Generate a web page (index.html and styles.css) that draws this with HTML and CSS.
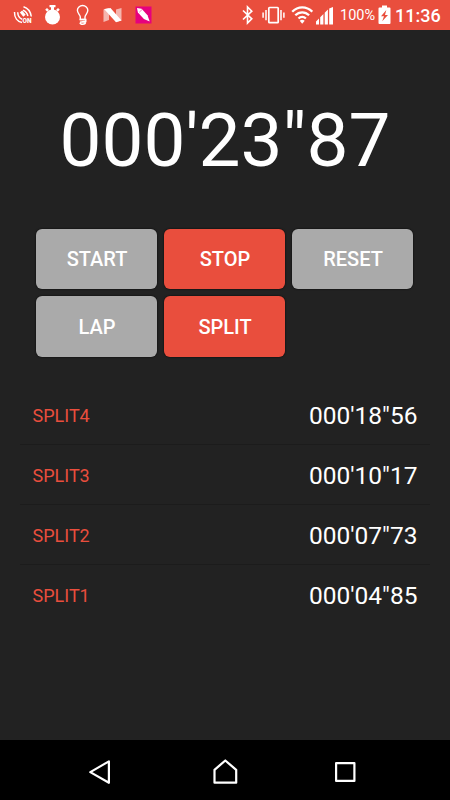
FILE: index.html
```html
<!DOCTYPE html>
<html lang="en">
<head>
    <meta charset="UTF-8">
    <meta name="viewport" content="width=device-width, initial-scale=1.0">
    <title>Stopwatch</title>
    <link rel="stylesheet" href="styles.css">
</head>
<body>
    <header class="status-bar">
        <div class="notifications">
            <!-- NFC -->
            <svg width="21" height="30" viewBox="0 0 21 30" fill="none" stroke="#fff" stroke-width="1.500">
                <path d="M1.500 12C1.300 17.500 4.500 21.500 9 22.600"/>
                <path d="M4.700 12.200C4.900 16 6.500 18.200 9.200 19.200"/>
                <path d="M10.500 6.800C14.500 8 17.500 11.500 18.300 16.500M10 10.300C12.600 11.300 14.300 13.300 14.900 16"/>
                <path d="M8 11.500L11.500 15.800" stroke-width="3"/>
                <text x="9.600" y="22.800" class="nfc-text">ON</text>
            </svg>
            <!-- Stopwatch -->
            <svg width="18" height="30" viewBox="0 0 18 30" fill="#fff">
                <circle cx="8.500" cy="17" r="7.500"/>
                <path d="M5.500 5h6v2.200H10V10H7V7.200H5.500zM1.200 9.800l1.800-1.800 2 2-1.800 1.800zM15.800 9.800L14 8l-2 2 1.800 1.800z"/>
            </svg>
            <!-- Bulb -->
            <svg width="14" height="30" viewBox="0 0 14 30" fill="none" stroke="#fff" stroke-width="1.400">
                <path d="M4.300 19.500V17C4.300 14.800 1.400 13.500 1.400 10.300a5.200 4.800 0 0 1 10.400 0C11.800 13.500 9 14.800 9 17v2.500z"/>
                <path d="M3.600 19.500h6.200v1.800l-5.800 1M9.600 21.800C9.600 23.600 8.400 24.300 6.700 24.300S4 23.600 4 22.800"/>
            </svg>
            <!-- Android N -->
            <svg width="20" height="30" viewBox="0 0 20 30">
                <path d="M.5 9.600L6 8v12L.5 22zM13 9.600L18.500 8v12.500L13 22z" fill="#f5b5ae"/>
                <path d="M1.500 9L7.500 8l11 12.500-5.500 1.700L1.500 9.500z" fill="#fff"/>
            </svg>
            <!-- Pen -->
            <svg width="17" height="30" viewBox="0 0 17 30">
                <path d="M.500 6.500h16v17H.500z" fill="#e6007e"/>
                <path d="M2 8l4.600.8 5.900 6.400 2.200 6.300-5.800-2.400-6-6.500z" fill="#fff"/>
                <path d="M4.200 12.300l2.800-2.700" stroke="#e6007e" stroke-width=".5"/>
            </svg>
        </div>
        <div class="system">
            <!-- Bluetooth -->
            <svg class="bluetooth" width="14" height="30" viewBox="0 0 14 30" fill="none" stroke="#fff" stroke-width="1.600">
                <path d="M2 10.500l8.800 8.300-4.300 4.200V7l4.300 4.200L2 19.500"/>
            </svg>
            <!-- Vibrate -->
            <svg class="vibrate" width="23" height="30" viewBox="0 0 23 30" fill="none" stroke="#fff" stroke-width="1.700">
                <rect x="6.800" y="7.500" width="9.400" height="15.200" rx=".8"/>
                <path d="M4 10v10.200M1.100 12.500v5.200M19 10v10.200M21.900 12.500v5.200" stroke-width="1.500"/>
            </svg>
            <!-- Wi-Fi -->
            <svg class="wifi" width="22" height="30" viewBox="0 0 22 30" fill="none" stroke="#fff" stroke-width="2.300">
                <path d="M1.200 11.800C7 6 15.500 6 21.300 11.800M4.300 15.300c4-4 9.800-4 13.800 0M7.500 18.500c2.200-2.100 5.200-2.100 7.400 0"/>
                <path d="M8.700 20.800q2.500-2 5 0l-2.500 2.900z" fill="#fff" stroke="none"/>
            </svg>
            <!-- Signal -->
            <svg class="signal" width="17" height="30" viewBox="0 0 17 30" fill="#fff">
                <path d="M0 24.500v-3l3-3v6zM4.200 24.500v-7.200l3.200-3.200v10.400zM8.700 24.500V12.800l3.200-3.200v14.900zM13.200 24.500V8.500L17 7v17.500z"/>
            </svg>
            <span class="percent">100%</span>
            <!-- Battery -->
            <svg class="battery" width="13" height="30" viewBox="0 0 13 30">
                <path d="M4 5.500h5v2h2.600q.9 0 .9.900v14.700q0 .9-.9.900H1.400q-.9 0-.9-.9V8.400q0-.9.900-.9H4z" fill="#fff"/>
                <path d="M8.300 10L3 16.200h3L4.200 21.300 10 15H7z" fill="#e94e3d"/>
            </svg>
            <span class="clock">11:36</span>
        </div>
    </header>

    <main class="app">
        <div class="timer">000'23"87</div>

        <div class="buttons">
            <button type="button">START</button>
            <button type="button" class="active">STOP</button>
            <button type="button">RESET</button>
            <button type="button">LAP</button>
            <button type="button" class="active">SPLIT</button>
        </div>

        <ul class="splits">
            <li><span class="name">SPLIT4</span><span class="time">000'18"56</span></li>
            <li><span class="name">SPLIT3</span><span class="time">000'10"17</span></li>
            <li><span class="name">SPLIT2</span><span class="time">000'07"73</span></li>
            <li><span class="name">SPLIT1</span><span class="time">000'04"85</span></li>
        </ul>
    </main>

    <nav class="nav-bar">
        <svg width="30" height="30" viewBox="0 0 30 30">
            <path d="M23.900 6.400v21.400L5.300 17.100z"/>
        </svg>
        <svg width="30" height="30" viewBox="0 0 30 30">
            <path d="M4.500 27.700V14.800L15.300 5.500l10.900 9.300v12.900z"/>
        </svg>
        <svg width="30" height="30" viewBox="0 0 30 30">
            <path d="M6.100 8.100h18.300v17.800H6.100z"/>
        </svg>
    </nav>
</body>
</html>
```
FILE: styles.css
```css
* {
    box-sizing: border-box;
}

body {
    font-family: Roboto, 'Liberation Sans', sans-serif;
    background: #222;
    color: #fff;
    margin: 0;
    height: 100vh;
    display: flex;
    flex-direction: column;
    overflow: hidden;
}

svg {
    display: block;
    flex: none;
}

/* Status Bar */
.status-bar {
    height: 30px;
    background: #e94e3d;
    display: flex;
    justify-content: space-between;
    padding: 0 9px 0 13px;
}

.notifications, .system {
    display: flex;
    align-items: center;
}

.notifications {
    gap: 12px;
}

.notifications svg:nth-child(2) {
    margin-left: -2px;
}

.notifications svg:nth-child(3) {
    margin-left: 2px;
}

.notifications svg:nth-child(4) {
    margin-left: 1px;
}

.nfc-text {
    font-size: 6.5px;
    font-weight: 900;
    fill: #fff;
    stroke: none;
}

.vibrate {
    margin-left: 7px;
}

.wifi {
    margin-left: 6px;
}

.signal {
    margin-left: 3px;
}

.percent {
    width: 38px;
    margin-left: 7px;
    font-size: 14.5px;
    line-height: 30px;
    padding-top: 1px;
}

.clock {
    width: 46px;
    margin-left: 4px;
    font-size: 18px;
    font-weight: 500;
    line-height: 30px;
    padding-top: 1px;
}

/* Stopwatch */
.app {
    flex: 1;
}

.timer {
    height: 198.5px;
    padding-top: 67px;
    font-size: 74.7px;
    line-height: 88px;
    text-align: center;
}

.buttons {
    display: grid;
    grid-template-columns: repeat(3, 121px);
    grid-auto-rows: 60.5px;
    gap: 7px;
    padding-left: 36px;
}

button {
    font-family: inherit;
    font-size: 20px;
    font-weight: 500;
    color: #fff;
    background: #aaa;
    border: none;
    border-radius: 6px;
    padding: 1px 0 0 1px;
    box-shadow: 0 0 2px rgba(0, 0, 0, 0.9);
}

button.active {
    background: #e94e3d;
}

/* Split Times */
.splits {
    list-style: none;
    margin: 28px 20px 0;
    padding: 0;
}

.splits li {
    height: 60px;
    display: flex;
    justify-content: space-between;
    align-items: center;
    padding: 2px 12.5px 0;
    border-bottom: 1px solid #1c1c1c;
}

.splits li:last-child {
    border-bottom: none;
}

.name {
    font-size: 18px;
    color: #e94e3d;
}

.time {
    font-size: 24.5px;
}

/* Navigation Bar */
.nav-bar {
    height: 60px;
    background: #000;
    display: flex;
    justify-content: center;
    gap: 90px;
    padding-top: 15px;
}

.nav-bar svg {
    fill: none;
    stroke: #fff;
    stroke-width: 2.2;
    stroke-linejoin: round;
}

.nav-bar svg:first-child {
    margin-left: -5px;
    margin-right: 5px;
}
```
